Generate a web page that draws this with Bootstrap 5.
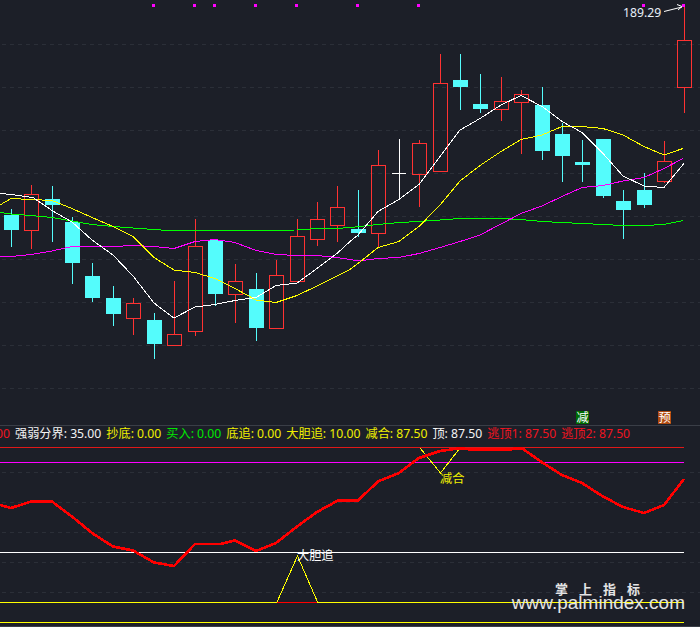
<!DOCTYPE html>
<html lang="zh">
<head>
<meta charset="utf-8">
<title>K线图</title>
<link href="https://cdn.jsdelivr.net/npm/bootstrap@5.3.0/dist/css/bootstrap.min.css" rel="stylesheet">
<style>
html,body{background:#1c1f28;margin:0;height:627px;overflow:hidden}
body{font-family:"Noto Sans","Noto Sans CJK SC",sans-serif;font-size:12.2px;line-height:16px}
.stage{width:700px;height:627px;background:#1c1f28;border-bottom:1px solid #3a3e47}
.pane-top{height:426px;border-bottom:1px solid #3a3e47}
.pane-top svg,.pane-low svg{display:block}
.legend-row{height:20px;gap:5px;white-space:nowrap}
.legend-clip{margin-left:-4px}
.c-red{color:#f01420}.c-white{color:#f4f4f4}.c-yellow{color:#f0f000}.c-green{color:#00e800}
.grid-dash{stroke:#2b2f38;stroke-width:1;stroke-dasharray:4 4;fill:none}
.aliased{shape-rendering:crispEdges}
.chart-label{font-family:"Noto Sans","Noto Sans CJK SC",sans-serif;font-size:12.2px}
.hline{fill:none;stroke-width:1;shape-rendering:crispEdges}
.s-darkred{stroke:#e01818}.s-magenta{stroke:#ff00ff}.s-white{stroke:#ffffff}.s-yellow{stroke:#ffff00}.s-red{stroke:#ff0000}
.watermark{right:16px;bottom:16px;color:#e4e4e4;text-align:right}
.wm-cn{font-family:"Noto Sans CJK SC",sans-serif;font-weight:700;font-size:13px;line-height:13px;letter-spacing:11px;margin-right:33px;margin-bottom:1px}
.wm-url{font-family:"Liberation Sans",sans-serif;font-size:19px;line-height:14px;margin-right:-1px}
</style>
</head>
<body>
<div class="stage d-flex flex-column position-relative">
  <div class="pane-top">
    <svg width="700" height="425" viewBox="0 0 700 425" xmlns="http://www.w3.org/2000/svg">
      <path class="grid-dash" d="M2 44.5H700M2 87.5H700M2 130.5H700M2 173.5H700M2 216.5H700M2 259.5H700M2 302.5H700M2 345.5H700M2 388.5H700"/>
      <g fill="#ff00ff" class="aliased">
        <rect x="152" y="4" width="3" height="3"/><rect x="193" y="4" width="3" height="3"/><rect x="213" y="4" width="3" height="3"/><rect x="254" y="4" width="3" height="3"/><rect x="295" y="4" width="3" height="3"/><rect x="356" y="4" width="3" height="3"/><rect x="417" y="4" width="3" height="3"/><rect x="642" y="4" width="3" height="3"/><rect x="682" y="4" width="3" height="3"/>
      </g>
      <path class="aliased" fill="none" stroke="#54fcfc" d="M11.5 209V247M52.5 186V242M72.5 217V284M92.5 263V302M113.5 286V326M154.5 313V359M215.5 239V306M256.5 273V341M358.5 190V237M460.5 54V110M480.5 74V113M542.5 87V160M562.5 123V182M582.5 140V182M603.5 139V198M623.5 190V239M644.5 173V208"/>
      <g class="aliased" fill="#54fcfc">
        <rect x="4" y="215" width="15" height="15"/><rect x="45" y="199" width="15" height="6"/><rect x="65" y="222" width="15" height="41"/><rect x="85" y="276" width="15" height="22"/><rect x="106" y="298" width="15" height="16"/><rect x="147" y="320" width="15" height="24"/><rect x="208" y="240" width="15" height="54"/><rect x="249" y="289" width="15" height="39"/><rect x="351" y="229" width="15" height="4"/><rect x="453" y="80" width="15" height="7"/><rect x="473" y="104" width="15" height="5"/><rect x="535" y="105" width="15" height="46"/><rect x="555" y="134" width="15" height="22"/><rect x="575" y="162" width="15" height="3"/><rect x="596" y="139" width="15" height="57"/><rect x="616" y="201" width="15" height="9"/><rect x="637" y="190" width="15" height="15"/>
      </g>
      <path class="aliased" fill="none" stroke="#ff3232" d="M31.5 185V194M31.5 231V249M133.5 298V303M133.5 319V335M174.5 281V334M195.5 219V246M195.5 332V336M235.5 264V281M235.5 295V323M276.5 260V275M297.5 219V236M317.5 202V219M317.5 240V246M337.5 186V207M337.5 226V242M378.5 150V165M378.5 233V248M419.5 140V143M419.5 174V207M440.5 54V83M501.5 77V101M501.5 110V121M521.5 90V94M521.5 103V154M664.5 141V161M664.5 182V183M684.5 7V40M684.5 88V113"/>
      <g class="aliased" fill="none" stroke="#ff3232">
        <rect x="24.5" y="194.5" width="14" height="36"/><rect x="126.5" y="303.5" width="14" height="15"/><rect x="167.5" y="334.5" width="14" height="11"/><rect x="188.5" y="246.5" width="14" height="85"/><rect x="228.5" y="281.5" width="14" height="13"/><rect x="269.5" y="275.5" width="14" height="53"/><rect x="290.5" y="236.5" width="14" height="45"/><rect x="310.5" y="219.5" width="14" height="20"/><rect x="330.5" y="207.5" width="14" height="18"/><rect x="371.5" y="165.5" width="14" height="68"/><rect x="412.5" y="143.5" width="14" height="31"/><rect x="433.5" y="83.5" width="14" height="88"/><rect x="494.5" y="101.5" width="14" height="8"/><rect x="514.5" y="94.5" width="14" height="8"/><rect x="657.5" y="161.5" width="14" height="20"/><rect x="677.5" y="40.5" width="14" height="47"/>
      </g>
      <path class="aliased" fill="none" stroke="#ffffff" d="M399.5 139V199M392 173.5H406"/>
      <g class="aliased" fill="none">
        <polyline stroke="#00ff00" points="0,212.5 11,214 31,215.5 52,217.5 72,221 92,224.5 113,226.5 133,228 154,229.5 167,230.5 195,230.5 297,230 317,228.5 337,228.5 350,227.5 378,224.5 399,222.5 419,221.5 440,220 460,218.5 501,218.5 521,219.5 542,221.5 562,222.5 582,223.5 603,224.5 623,225.5 644,225.5 664,224.5 683,220.5"/>
        <polyline stroke="#ff00ff" points="0,256 11,256.5 31,254.5 52,251 72,246.5 92,246.5 113,246.5 133,245.5 154,246.5 174,248.5 195,241.5 215,239.5 235,242.5 256,250.5 276,254.5 297,255.5 317,255.5 337,257.5 350,259.5 358,261 378,258.5 399,257.5 419,253.5 440,247.5 460,241.5 480,235 501,224 521,213.5 542,206 562,196.5 582,187.5 603,185.5 623,181 644,177.5 664,168.5 683,158.5"/>
        <polyline stroke="#ffff00" points="0,205 11,198.5 31,199.5 52,200.5 72,208.5 92,217.5 113,226.5 133,236.5 154,257.5 174,270 195,272.5 215,278.5 235,288.5 256,300 276,302.5 297,295.5 317,286 337,276 350,269.5 358,263.5 378,247.5 399,241.5 419,226.5 440,205 460,181 480,165.5 501,151.5 521,139.5 542,135 562,126.5 582,126.5 603,128.5 623,135 644,146.5 664,155 683,148.5"/>
        <polyline stroke="#ffffff" points="0,193.5 11,194.5 33,197.5 52,210.5 72,222 92,240 113,255 133,276 154,303 174,318 195,307 215,304.5 235,300.5 256,297.5 276,285.5 297,283 317,268.5 337,253.5 350,241.5 358,235 378,211.5 399,199.5 419,184.5 440,156.5 460,130 480,118.5 501,105 521,95.5 542,106.5 562,121.5 582,132.5 603,153.5 623,176 644,186 664,187.5 684,163.5"/>
      </g>
      <text class="chart-label" x="623" y="17" fill="#e8f0f8">189.29</text>
      <path fill="none" stroke="#ffffff" d="M664 11.5L682 7M677 4.5L682 6.5L678 10"/>
      <rect class="aliased" x="576" y="411" width="13" height="13" fill="#006a00"/>
      <text class="chart-label" x="576.5" y="422" fill="#ffffff">减</text>
      <rect class="aliased" x="658" y="411" width="13" height="13" fill="#b04a10"/>
      <text class="chart-label" x="658.5" y="422" fill="#ffffff">预</text>
    </svg>
  </div>
  <div class="d-flex legend-row">
    <span class="c-red legend-clip">00</span>
    <span class="c-white">强弱分界: 35.00</span>
    <span class="c-yellow">抄底: 0.00</span>
    <span class="c-green">买入: 0.00</span>
    <span class="c-yellow">底追: 0.00</span>
    <span class="c-yellow">大胆追: 10.00</span>
    <span class="c-yellow">减合: 87.50</span>
    <span class="c-white">顶: 87.50</span>
    <span class="c-red">逃顶1: 87.50</span>
    <span class="c-red">逃顶2: 87.50</span>
  </div>
  <div class="pane-low flex-grow-1 position-relative">
    <svg width="700" height="180" viewBox="0 446 700 180" xmlns="http://www.w3.org/2000/svg">
      <path class="grid-dash" d="M2 472.5H700M2 502.5H700M2 532.5H700M2 562.5H700M2 592.5H700"/>
      <line class="hline s-darkred" x1="0" y1="447.5" x2="684" y2="447.5"/>
      <line class="hline s-magenta" x1="0" y1="462.5" x2="684" y2="462.5"/>
      <line class="hline s-white" x1="0" y1="552.5" x2="684" y2="552.5"/>
      <line class="hline s-yellow" x1="0" y1="602.5" x2="684" y2="602.5"/>
      <line class="hline s-yellow" x1="0" y1="622.5" x2="684" y2="622.5"/>
      <line class="hline s-red" x1="277" y1="602.5" x2="317" y2="602.5"/>
      <polyline class="hline s-yellow" points="277,602 297.5,556 317.5,602"/>
      <polyline class="hline s-yellow" points="420,448 440.5,473 460,448"/>
      <polyline class="aliased" fill="none" stroke="#ff0000" stroke-width="2.6" stroke-linejoin="round" points="0,505 11,508 31,501.5 52,501.5 72,516.5 92,533 113,546.5 133,550.5 154,562.5 174,566 195,544 220,544 235,540.5 256,551 276,543 297,526.5 317,512 338,500.5 358,500.5 378,481.5 399,473 419,458 440,451 460,448.3 473,449.7 511,449.7 514,448.3 522,448.3 542,462.3 562,475 582,483 603,496.5 623,507 644,513 664,505 684,479"/>
      <text class="chart-label" x="297" y="560" fill="#ffffff">大胆追</text>
      <text class="chart-label" x="440" y="483" fill="#f0f000">减合</text>
    </svg>
    <div class="watermark position-absolute">
      <div class="wm-cn">掌上指标</div>
      <div class="wm-url">www.palmindex.com</div>
    </div>
  </div>
</div>
<script src="https://cdn.jsdelivr.net/npm/bootstrap@5.3.0/dist/js/bootstrap.bundle.min.js"></script>
</body>
</html>
